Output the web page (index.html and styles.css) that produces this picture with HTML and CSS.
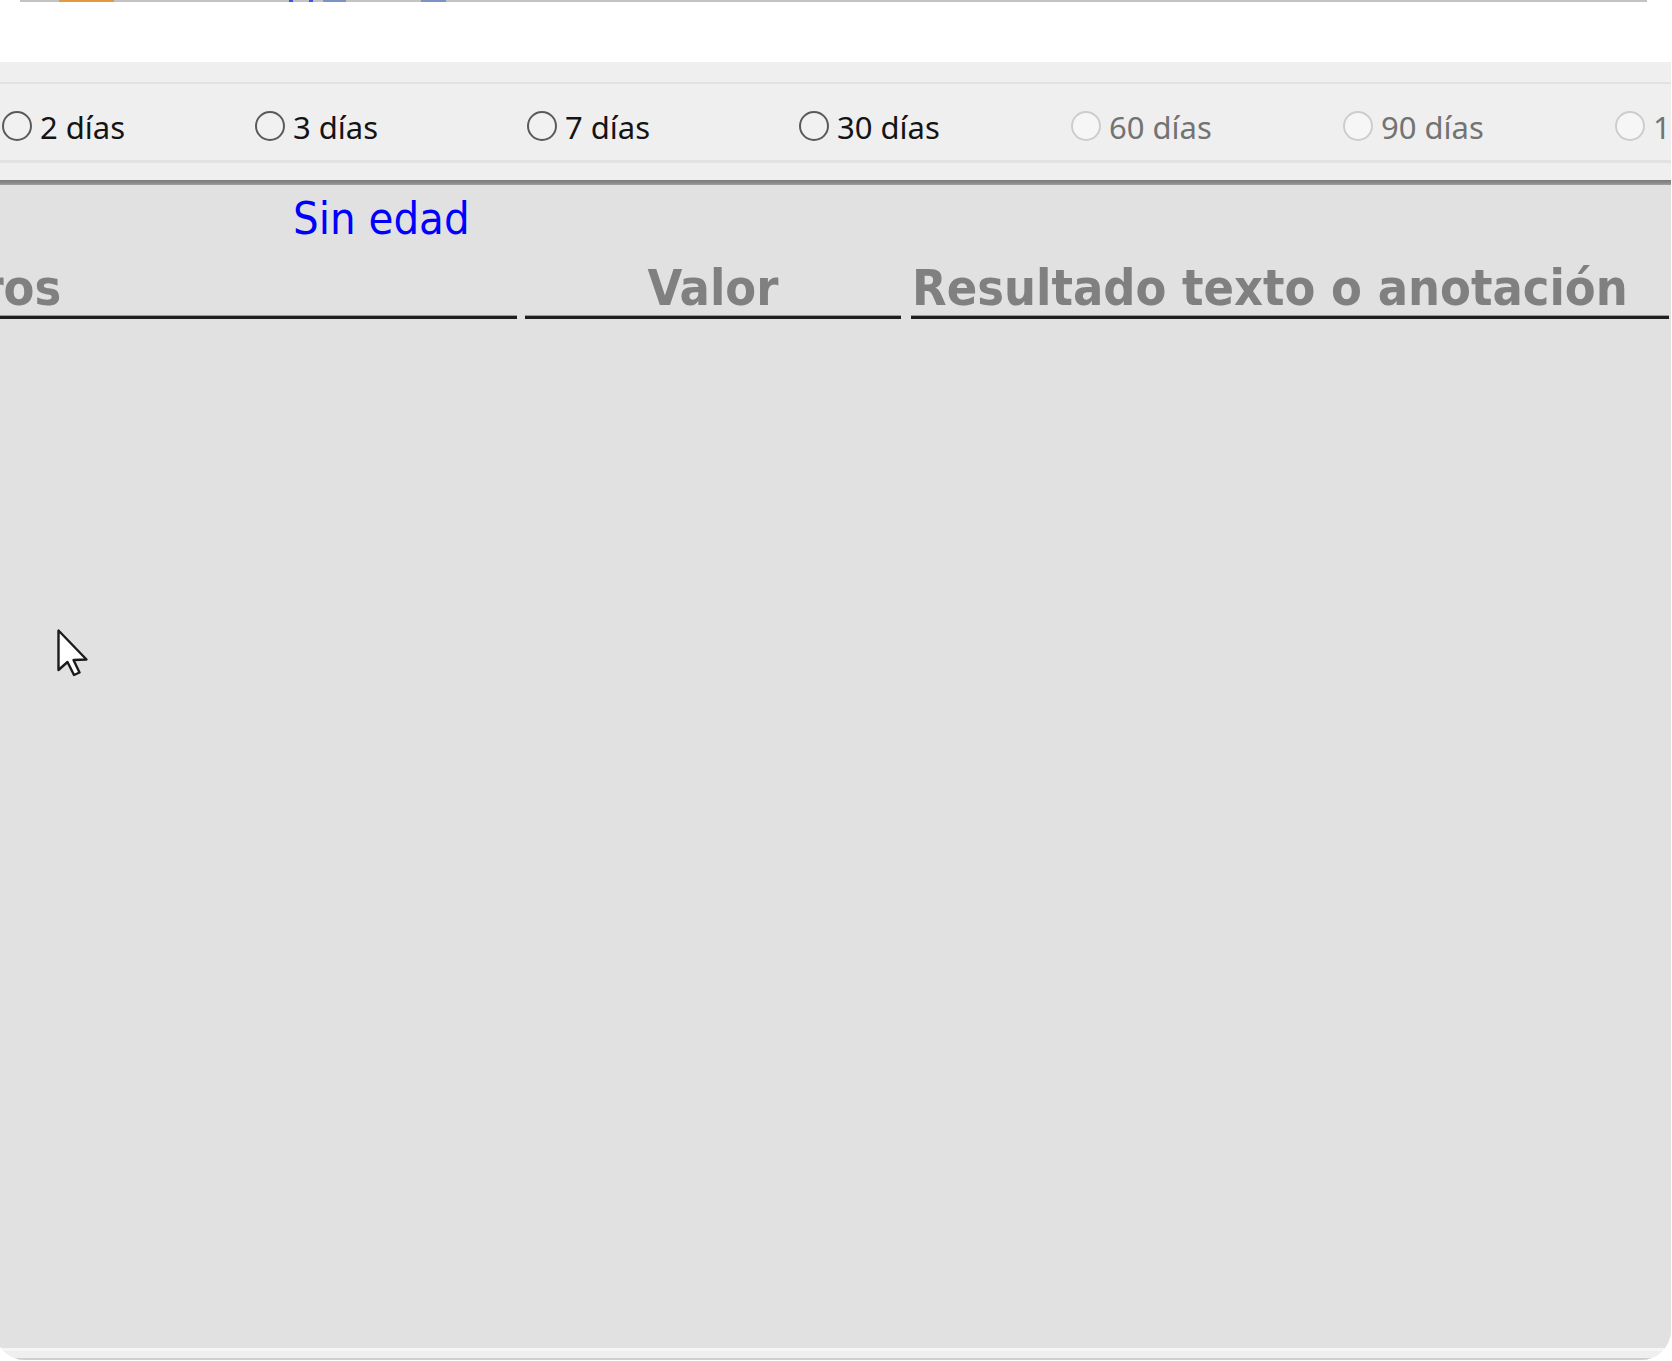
FILE: index.html
```html
<!DOCTYPE html>
<html lang="es">
<head>
<meta charset="utf-8">
<title>Resultados</title>
<link rel="stylesheet" href="styles.css">
</head>
<body>
<div class="topline">
  <span class="bit bit-orange"></span>
  <span class="bit bit-blue1"></span>
  <span class="bit bit-blue2"></span>
  <span class="bit bit-blue3"></span>
  <span class="bit bit-blue4"></span>
</div>
<div class="gap-white"></div>
<div class="window">
  <div class="band">
    <div class="band-pad"></div>
    <div class="radios">
      <label class="radio first"><span class="dot"></span><span class="rlabel">2 días</span></label>
      <label class="radio"><span class="dot"></span><span class="rlabel">3 días</span></label>
      <label class="radio"><span class="dot"></span><span class="rlabel">7 días</span></label>
      <label class="radio"><span class="dot"></span><span class="rlabel">30 días</span></label>
      <label class="radio disabled"><span class="dot"></span><span class="rlabel">60 días</span></label>
      <label class="radio disabled"><span class="dot"></span><span class="rlabel">90 días</span></label>
      <label class="radio disabled"><span class="dot"></span><span class="rlabel">180 días</span></label>
    </div>
    <div class="band-pad bottom"></div>
  </div>
  <div class="separator"></div>
  <div class="panel">
    <div class="age">Sin edad</div>
    <div class="headers">
      <div class="hcell first"><span class="clip">Parámetros</span></div>
      <div class="hcell center">Valor</div>
      <div class="hcell last">Resultado texto o anotación</div>
    </div>
    <svg class="cursor" width="32" height="48" viewBox="0 0 32 48" aria-hidden="true">
      <path d="M1.5 1.5 L1.5 41 L10.5 33 L17 46 L22.5 43.5 L16.5 31 L29.5 30.5 Z" fill="#ffffff" stroke="#1c1c1c" stroke-width="2.4" stroke-linejoin="round"/>
    </svg>
  </div>
  <div class="window-foot"></div>
</div>
</body>
</html>
```

FILE: styles.css
```css
html, body {
  margin: 0;
  padding: 0;
  background: #ffffff;
  overflow: hidden;
}

body {
  width: 1672px;
  height: 1361px;
  font-family: "DejaVu Sans Condensed", "DejaVu Sans", sans-serif;
}

.topline {
  display: flex;
  height: 2px;
  margin: 0 25px 0 20px;
  background: #c3c3c3;
}

.bit {
  display: block;
  height: 2px;
}

.bit-orange { margin-left: 39px; width: 55px; background: #e39a3c; }
.bit-blue1 { margin-left: 175px; width: 4px; background: #3a54e6; }
.bit-blue2 { margin-left: 16px; width: 4px; background: #3a54e6; }
.bit-blue3 { margin-left: 10px; width: 23px; background: #7c93c8; }
.bit-blue4 { margin-left: 75px; width: 25px; background: #7c93c8; }

.gap-white {
  height: 60px;
}

.window {
  width: 1676px;
  height: 1298px;
  margin-left: -5px;
  background: #efefef;
  border-radius: 0 0 30px 30px;
  overflow: hidden;
  display: flex;
  flex-direction: column;
  position: relative;
}

.band {
  display: flex;
  flex-direction: column;
}

.band-pad {
  height: 20px;
  border-bottom: 2px solid #e2e2e2;
}

.band-pad.bottom {
  height: 17px;
  border-bottom: none;
  border-top: 3px solid #e2e2e2;
}

.radios {
  display: flex;
  height: 69px;
  padding: 7px 0 0 7px;
  align-items: center;
  overflow: hidden;
  font-family: "Noto Sans", "Open Sans", sans-serif;
  font-size: 31px;
  color: #141414;
}

.radio {
  flex: 0 0 272px;
  display: flex;
  align-items: center;
  gap: 8px;
  white-space: nowrap;
}

.radio.first {
  flex-basis: 253px;
}

.dot {
  width: 26px;
  height: 26px;
  border: 2px solid #5a5a5a;
  border-radius: 50%;
  background: #f1f1f1;
  flex-shrink: 0;
}

.rlabel {
  line-height: 40px;
  padding-top: 3px;
}

.radio.disabled {
  color: #737373;
}

.radio.disabled .dot {
  border-color: #cdcdcd;
  background: #f6f6f6;
}

.separator {
  height: 5px;
  background: linear-gradient(#7b7b7b, #8a8a8a 60%, #a0a0a0);
}

.panel {
  flex: 1;
  background: #e1e1e1;
  padding: 8px 0 0 5px;
  position: relative;
}

.age {
  padding-left: 293px;
  font-size: 45px;
  line-height: 52px;
  font-stretch: condensed;
  color: #0000ff;
}

.headers {
  display: grid;
  grid-template-columns: 517px 376px 760px;
  column-gap: 8px;
  margin-top: 16px;
}

.hcell {
  font-size: 50px;
  font-weight: bold;
  font-stretch: condensed;
  line-height: 55px;
  color: #808080;
  border-bottom: 3px solid #1e1e1e;
  box-shadow: 0 -1px 0 #9a9a9a inset;
  white-space: nowrap;
}

.hcell.first {
  overflow: hidden;
}

.hcell.center {
  text-align: center;
}

.hcell.last {
  margin-left: 2px;
  padding-left: 1px;
}

.clip {
  display: inline-block;
  margin-left: -232px;
}

.cursor {
  position: absolute;
  left: 62px;
  top: 444px;
}

.window-foot {
  border-top: 3px solid #f6f6f6;
  border-bottom: 2px solid #cfcfcf;
  background: #efefef;
  box-sizing: border-box;
  height: 12px;
}
```
